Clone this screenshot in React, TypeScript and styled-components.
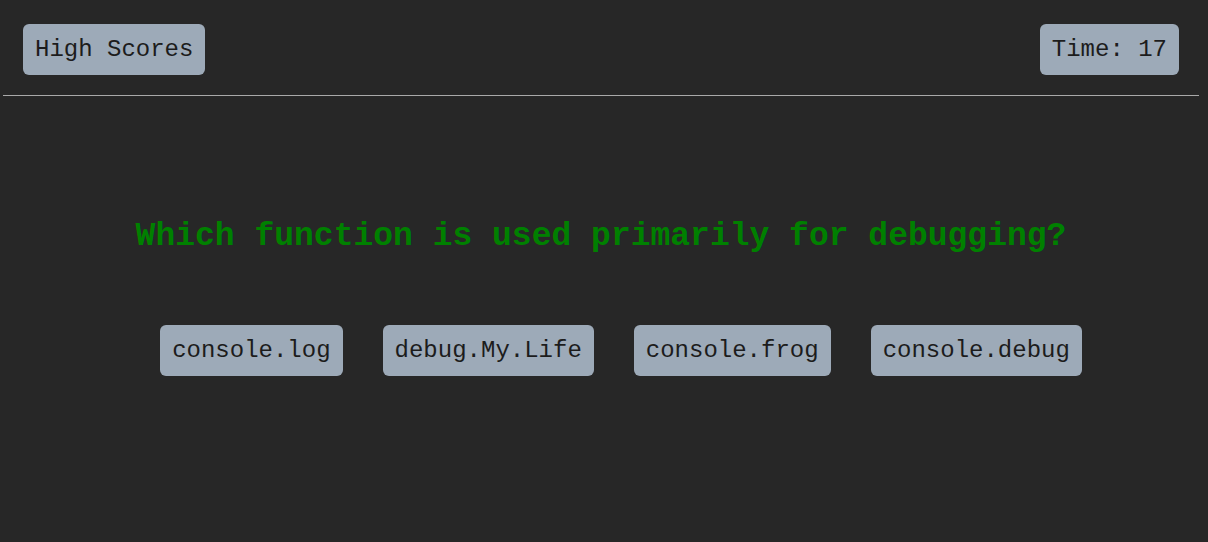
import { createGlobalStyle } from "styled-components";
import styled from "styled-components";

const answers = ["console.log", "debug.My.Life", "console.frog", "console.debug"];

const App = () => {
  return (
    <>
      <GlobalStyle />
      <Page>
        <TopBar>
          <Pill>High Scores</Pill>
          <Pill>Time: 17</Pill>
        </TopBar>
        <Quiz>
          <Question>Which function is used primarily for debugging?</Question>
          <Choices>
            {answers.map((a) => (
              <Choice key={a}>{a}</Choice>
            ))}
          </Choices>
        </Quiz>
      </Page>
    </>
  );
};

export default App;

const GlobalStyle = createGlobalStyle`
  html, body {
    margin: 0;
    background: #272727;
    height: 100%;
  }
  body {
    font-family: "Liberation Mono", "Courier New", monospace;
  }
`;

const Page = styled.div`
  padding: 0 9px 0 3px;
`;

const TopBar = styled.header`
  display: flex;
  justify-content: space-between;
  align-items: center;
  padding: 24px 20px 20px;
  border-bottom: 1px solid #a9a9a9;
`;

const Pill = styled.button`
  font-family: "Liberation Mono", "Courier New", monospace;
  font-size: 24px;
  line-height: 27px;
  color: #1c1c1c;
  background: #9daab8;
  border: none;
  border-radius: 6px;
  padding: 12px 12px;
  cursor: pointer;
`;

const Quiz = styled.main`
  display: flex;
  flex-direction: column;
  align-items: center;
`;

const Question = styled.h1`
  margin: 122px 0 0;
  font-size: 33px;
  font-weight: bold;
  color: #008000;
  line-height: 37px;
`;

const Choices = styled.div`
  display: flex;
  justify-content: center;
  margin-top: 70px;
`;

const Choice = styled(Pill)`
  margin-left: 40px;
`;
